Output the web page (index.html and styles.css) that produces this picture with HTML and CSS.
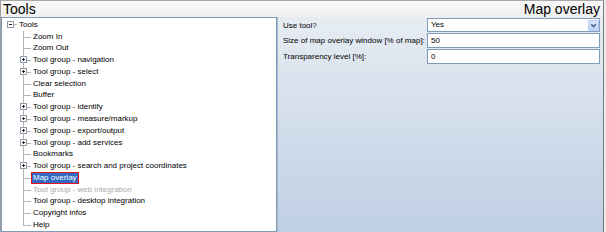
FILE: index.html
```html
<!DOCTYPE html>
<html>
<head>
<meta charset="utf-8">
<link rel="stylesheet" href="styles.css">
</head>
<body>
<div class="window">
  <div class="header">
    <span class="title">Tools</span>
    <span class="title">Map overlay</span>
  </div>
  <div class="main">
    <div class="tree">
      <div class="root">
        <svg class="box" width="7" height="7" viewBox="0 0 7 7"><rect x="0.5" y="0.5" width="6" height="6" fill="#fff" stroke="#8d9bac"/><path d="M2 3.5H5" stroke="#222" stroke-width="1"/></svg>
        <span class="conn"></span>
        <span class="label">Tools</span>
      </div>
      <ul class="children">
        <li><span class="label">Zoom In</span></li>
        <li><span class="label">Zoom Out</span></li>
        <li class="group"><svg class="box" width="7" height="7" viewBox="0 0 7 7"><rect x="0.5" y="0.5" width="6" height="6" fill="#fff" stroke="#8d9bac"/><path d="M2 3.5H5M3.5 2V5" stroke="#222" stroke-width="1"/></svg><span class="label">Tool group - navigation</span></li>
        <li class="group"><svg class="box" width="7" height="7" viewBox="0 0 7 7"><rect x="0.5" y="0.5" width="6" height="6" fill="#fff" stroke="#8d9bac"/><path d="M2 3.5H5M3.5 2V5" stroke="#222" stroke-width="1"/></svg><span class="label">Tool group - select</span></li>
        <li><span class="label">Clear selection</span></li>
        <li><span class="label">Buffer</span></li>
        <li class="group"><svg class="box" width="7" height="7" viewBox="0 0 7 7"><rect x="0.5" y="0.5" width="6" height="6" fill="#fff" stroke="#8d9bac"/><path d="M2 3.5H5M3.5 2V5" stroke="#222" stroke-width="1"/></svg><span class="label">Tool group - identify</span></li>
        <li class="group"><svg class="box" width="7" height="7" viewBox="0 0 7 7"><rect x="0.5" y="0.5" width="6" height="6" fill="#fff" stroke="#8d9bac"/><path d="M2 3.5H5M3.5 2V5" stroke="#222" stroke-width="1"/></svg><span class="label">Tool group - measure/markup</span></li>
        <li class="group"><svg class="box" width="7" height="7" viewBox="0 0 7 7"><rect x="0.5" y="0.5" width="6" height="6" fill="#fff" stroke="#8d9bac"/><path d="M2 3.5H5M3.5 2V5" stroke="#222" stroke-width="1"/></svg><span class="label">Tool group - export/output</span></li>
        <li class="group"><svg class="box" width="7" height="7" viewBox="0 0 7 7"><rect x="0.5" y="0.5" width="6" height="6" fill="#fff" stroke="#8d9bac"/><path d="M2 3.5H5M3.5 2V5" stroke="#222" stroke-width="1"/></svg><span class="label">Tool group - add services</span></li>
        <li><span class="label">Bookmarks</span></li>
        <li class="group"><svg class="box" width="7" height="7" viewBox="0 0 7 7"><rect x="0.5" y="0.5" width="6" height="6" fill="#fff" stroke="#8d9bac"/><path d="M2 3.5H5M3.5 2V5" stroke="#222" stroke-width="1"/></svg><span class="label">Tool group - search and project coordinates</span></li>
        <li><span class="label selected">Map overlay</span></li>
        <li><span class="label disabled">Tool group - web integration</span></li>
        <li><span class="label">Tool group - desktop integration</span></li>
        <li><span class="label">Copyright infos</span></li>
        <li><span class="label">Help</span></li>
      </ul>
    </div>
    <div class="props">
      <div class="grid">
        <span class="plabel">Use tool?</span>
        <div class="select">
          <span class="value">Yes</span>
          <span class="btn"><svg width="11" height="11" viewBox="0 0 11 11"><path d="M3.2 4.3L5.5 6.6L7.8 4.3" fill="none" stroke="#4d6185" stroke-width="1.5"/></svg></span>
        </div>
        <span class="plabel">Size of map overlay window [% of map]:</span>
        <div class="input">50</div>
        <span class="plabel">Transparency level [%]:</span>
        <div class="input">0</div>
      </div>
    </div>
  </div>
</div>
</body>
</html>
```
FILE: styles.css
```css
html, body {
  margin: 0;
  padding: 0;
}
body {
  width: 606px;
  height: 232px;
  background: #ebebeb;
  overflow: hidden;
  font-family: "Liberation Sans", Arial, sans-serif;
}
.window {
  width: 602px;
  border-left: 1px solid #a0a0a0;
  border-right: 1px solid #7a7a7a;
  border-top: 1px solid #a8a8a8;
}
.header {
  height: 16px;
  display: flex;
  justify-content: space-between;
  align-items: center;
  background: linear-gradient(#f8f8f8, #efefef);
  padding: 0 3px 0 2px;
}
.title {
  font-size: 14px;
  line-height: 16px;
  color: #000;
}
.main {
  display: flex;
  height: 215px;
}
.tree {
  width: 274px;
  background: #fff;
  border: 1px solid #7f9db9;
  padding-top: 1px;
  font-size: 8px;
  color: #000;
}
.root {
  display: flex;
  align-items: center;
  height: 11.78px;
}
.root .box {
  margin-left: 5px;
  display: block;
}
.conn {
  width: 3px;
  height: 1px;
  background: #b4b4b4;
}
.label {
  display: inline-block;
  line-height: 10px;
  padding: 0 1px;
  border: 1px solid transparent;
  white-space: nowrap;
}
.children {
  list-style: none;
  margin: 0;
  padding: 0;
}
.children li {
  position: relative;
  height: 11.78px;
  display: flex;
  align-items: center;
  padding-left: 29px;
}
.children li::before {
  content: "";
  position: absolute;
  left: 21px;
  top: 0;
  bottom: 0;
  border-left: 1px solid #b4b4b4;
}
.children li:last-child::before {
  bottom: 50%;
}
.children li::after {
  content: "";
  position: absolute;
  left: 21px;
  width: 8px;
  top: 50%;
  border-top: 1px solid #b4b4b4;
}
.children li .box {
  position: absolute;
  left: 18px;
  top: 2px;
  z-index: 1;
}
.label.selected {
  background: #316ac5;
  color: #fff;
  border-color: #e8121c;
}
.label.disabled {
  color: #a9a9a9;
}
.props {
  flex: 1;
  border-left: 1px solid #a6b8d0;
  background: linear-gradient(#e6ecf2, #bfcfe4);
  padding: 1px 2px 0 5px;
}
.grid {
  display: grid;
  grid-template-columns: 144px 173px;
  grid-template-rows: 15px 16px 16px;
  align-items: start;
  font-size: 8px;
}
.plabel {
  align-self: center;
  white-space: nowrap;
  color: #000;
  line-height: 10px;
}
.select, .input {
  box-sizing: border-box;
  border: 1px solid #7f9db9;
  background: #fff;
  display: flex;
  align-items: center;
  padding-left: 3px;
  line-height: 10px;
}
.select {
  height: 14px;
  justify-content: space-between;
}
.input {
  height: 15px;
}
.btn {
  width: 11px;
  height: 11px;
  box-sizing: border-box;
  border: 1px solid #b8ccf4;
  border-radius: 1px;
  background: linear-gradient(#dbe6fd, #bcd0fa);
  display: flex;
  align-items: center;
  justify-content: center;
}
.btn svg {
  display: block;
  margin: -1px;
}
```
